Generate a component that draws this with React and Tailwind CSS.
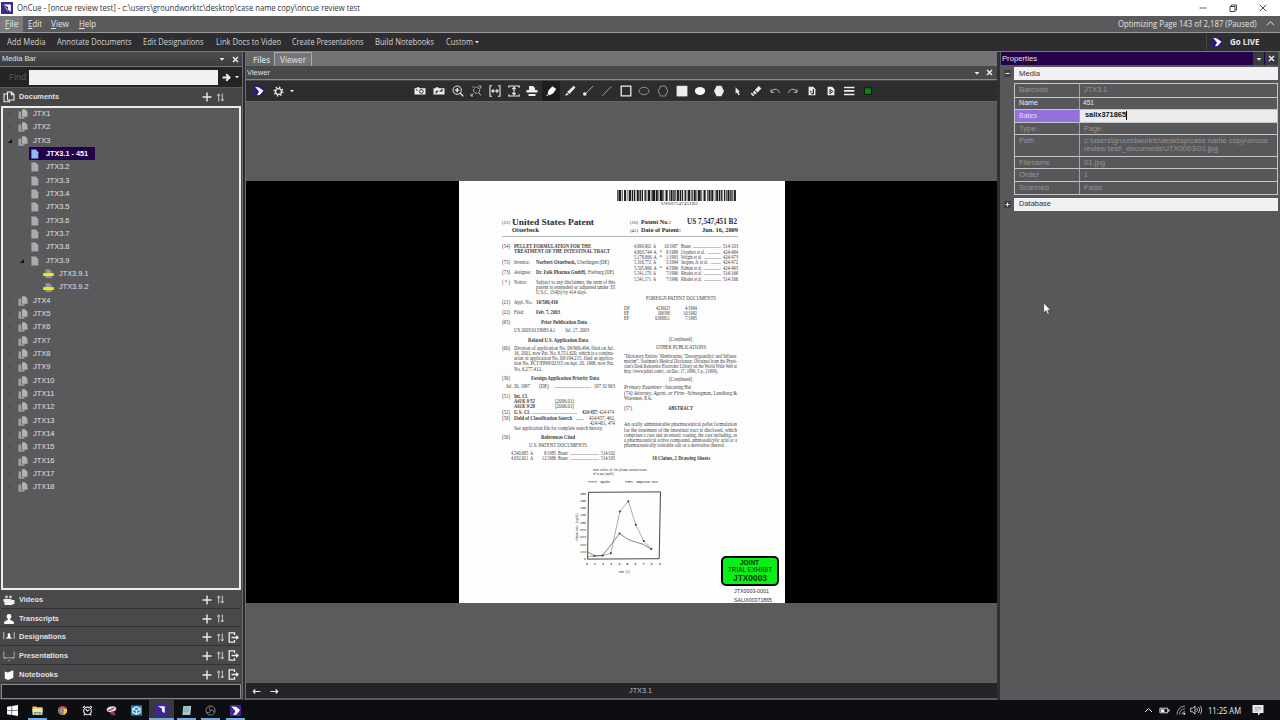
import React, { useLayoutEffect, useRef } from "react";

/* Text set to an exact width */
function Fit({ w, className = "", children }) {
  const ref = useRef(null);
  useLayoutEffect(() => {
    const el = ref.current;
    el.style.transform = "none";
    const natural = el.getBoundingClientRect().width;
    if (natural > 0) el.style.transform = `scaleX(${w / natural})`;
  }, [w, children]);
  return (
    <span className="flex shrink-0 whitespace-nowrap" style={{ width: w }}>
      <span ref={ref} className={"shrink-0 origin-left whitespace-pre " + className}>{children}</span>
    </span>
  );
}

const UI = "font-['Open_Sans',sans-serif]";

/* ---------- icons ---------- */
const Svg = ({ s = 12, className = "", children, vb = "0 0 12 12" }) => (
  <svg width={s} height={s} viewBox={vb} className={"shrink-0 " + className} fill="none" stroke="#ececee" strokeWidth="1">{children}</svg>
);
const Plus = () => <Svg s={10} vb="0 0 10 10"><path d="M5 .5v9M.5 5h9" strokeWidth="1.4" /></Svg>;
const Sort = () => <Svg s={9} vb="0 0 9 10"><path d="M2.5 9.5V1.5M1 3l1.5-2L4 3M6.5.5v8M5 7l1.5 2L8 7" strokeWidth=".9" /></Svg>;
const Exit = () => <Svg s={11} vb="0 0 11 11" className="-ml-[1.5px]"><path d="M6.5 3V.8H1.2v9.4h5.3V8M3.5 5.5H10M8.2 3.8L10 5.5 8.2 7.2" strokeWidth="1.3" /></Svg>;
const Down = () => <Svg s={6} vb="0 0 6 6"><path d="M.6 2h4.8L3 4.7z" fill="#eee" stroke="none" /></Svg>;
const Tiny = () => <Svg s={4} vb="0 0 4 4"><path d="M0 1h4L2 3.2z" fill="#eee" stroke="none" /></Svg>;
const Close = () => <Svg s={7} vb="0 0 7 7"><path d="M1 1l5 5M6 1L1 6" strokeWidth="1.5" /></Svg>;
const DocsHead = () => <Svg s={12}><path d="M4.5 1h4l2.5 2.5V9H4.5zM8.3 1v2.8H11M4.5 3H1v7.8h5.5V9" strokeWidth="1.1" /></Svg>;
const Docs = () => <Svg s={10} vb="0 0 10 10"><path d="M.5 2.5h2.7v5.7h3.3v1.6h-6z" fill="#a2a2a4" stroke="none" /><path d="M4 .3h3l2.5 2.5v5H4z" fill="#b2b2b4" stroke="none" /></Svg>;
const Doc = ({ sel }) => <Svg s={10} vb="0 0 10 10"><path d="M1.4.5h4.4l2.5 2.7v6.3H1.4z" fill={sel ? "#8fb8f4" : "#aaaaac"} stroke="none" /></Svg>;
const Hl = () => <Svg s={11} vb="0 0 11 10"><path d="M2.5.8h4l2 2v6.7h-6z" fill="#96968c" stroke="none" /><path d="M.2 4.6h10.6v2.9H.2z" fill="#f0ec10" stroke="none" /></Svg>;
const Cue = ({ s = 10 }) => (
  <Svg s={s} vb="0 0 10 10"><path d="M0 0h10v10H0z" fill="#2a1b80" stroke="none" /><path d="M1 .8l4 .7 4.5 3.2L5.6 9 3 9.3 5 5.6z" fill="#fff" stroke="none" /></Svg>
);
const AppIcon = ({ s = 11 }) => (
  <Svg s={s} vb="0 0 11 11"><path d="M0 0h11v11H0z" fill="#3a2b86" stroke="none" /><path d="M2 2.2h7v7L6.5 7V4.5z" fill="#fff" stroke="none" /><path d="M2 2.2l4 4V9z" fill="#a69ed4" stroke="none" /></Svg>
);

const camBody = <path d="M.5 3.2h2L3 2.3h2.2l.5.9h5.8v6.3H.5z" fill="#ececee" stroke="none" />;
const page = <path d="M2.6 1.8h4.6l2.2 2.4v6H2.6z" fill="#ececee" stroke="none" />;
const tools = [
  <>{camBody}<circle cx="7.4" cy="6.4" r="1.9" stroke="#333" /><path d="M2 5h1.6" stroke="#333" /></>,
  <>{camBody}<path d="M3 8.2V6.2h2M3.2 8L5.4 6M9.2 4v2.2h-2M9 4.4L6.8 6.6" stroke="#333" strokeWidth="1" /></>,
  <><circle cx="5.2" cy="5.2" r="4.2" /><path d="M8.2 8.2l3.2 3.2M5.2 3v4.4M3 5.2h4.4" strokeWidth="1.3" /></>,
  <g stroke="#bdbdbf"><path d="M2.5 2.5l1-1.3M10.8 1v2.5M10.8 1H8.5M1 11l2.4-2.4M1 8.7V11h2" /><circle cx="6.6" cy="5.2" r="3.1" strokeDasharray="3 .8" /><path d="M8.8 7.6l2 2.8" /></g>,
  <path d="M3 .8H1v10.4h2M9 .8h2v10.4H9M3 6h6M4.6 4.3L2.8 6l1.8 1.7M7.4 4.3L9.2 6 7.4 7.7" strokeWidth="1.1" />,
  <path d="M.8 2.8V1h10.4v1.8M.8 9.2V11h10.4V9.2M6 2.5v7M4.3 4.2L6 2.4l1.7 1.8M4.3 7.8L6 9.6l1.7-1.8" strokeWidth="1.1" />,
  <g fill="#ececee" stroke="none"><path d="M3 1h4l2 2v2.6H3zM.5 5h11v2.6H.5zM2.5 9h7v2h-7z" /></g>,
  <g fill="#fff" stroke="none"><path d="M7.4 1.2l3.8 2.8-3.2 4.6-3.6 1.6-1.6-1.2.6-3.6zM2.2 9.2l1.4 1-2.4.8z" /></g>,
  <g fill="#ececee" stroke="none"><path d="M9.7.8l1.8 1.8-6 6.4-2.4-1.9zM2.7 7.7l2 1.8-3.6 1.5z" /></g>,
  <><path d="M11.2 1L4.2 8" stroke="#bbb" strokeWidth=".9" /><circle cx="2.8" cy="9" r="1.8" fill="#ececee" stroke="none" /></>,
  <path d="M10.5 1.3L1.2 10.8" stroke="#a8a8aa" strokeWidth=".9" />,
  <path d="M1.2 1.2h9.6v9.6H1.2z" strokeWidth="1.3" />,
  <ellipse cx="6" cy="6" rx="4.9" ry="3.7" stroke="#98989a" strokeWidth=".9" />,
  <path d="M3.6 1h4.8l2.4 5-2.4 5H3.6L1.2 6z" stroke="#98989a" strokeWidth=".9" />,
  <path d="M.6.8h10.8v10.6H.6z" fill="#ececee" stroke="none" />,
  <ellipse cx="6" cy="6" rx="5.2" ry="4" fill="#f4f4f4" stroke="none" />,
  <path d="M3.6.7h4.8L11 6l-2.6 5.3H3.6L1 6z" fill="#ececee" stroke="none" />,
  <path d="M4.6 2.2l4.4 4.6H7.4l1.4 2.9-1.4.6-1.3-2.7-1.5 1.2z" fill="#ececee" stroke="none" />,
  <g fill="#ececee" stroke="none"><path d="M8.7 1l2.7 2.5-3.8 4L4.8 5zM4.2 5.6l2.7 2.6-2 1.2-2-1.7zM1.7 7.6l2.7 2.6-1.2 1L.7 9z" /></g>,
  <path d="M2 4.3v3h3M2.2 7C3.2 4 8.8 2.4 10.6 7.8" stroke="#bdbdbf" />,
  <path d="M10 4.3v3H7M9.8 7C8.8 4 3.2 2.4 1.4 7.8" stroke="#bdbdbf" />,
  <>{page}<path d="M6.8 4.6h.6v4H5.2M5.4 6L4.2 7.2" stroke="#222" strokeWidth="1.1" /></>,
  <>{page}<path d="M5 4.5l2.8 2-2.8 2.1z" stroke="#222" strokeWidth="1" /></>,
  <path d="M1 2.5h10.4M1 5.9h10.4M1 9.5h10.4" strokeWidth="1.6" />,
  <path d="M2.4 2.8h7v6.6h-7z" fill="#0b850b" stroke="#061c06" />,
];

/* ---------- left panel ---------- */
const seq = (a, b, f) => Array.from({ length: b - a + 1 }, (_, i) => f(a + i));
const tree = [
  { t: "JTX1", k: "set" }, { t: "JTX2", k: "set" }, { t: "JTX3", k: "set", open: true },
  { t: "JTX3.1 - 451", k: "doc", sel: true },
  ...seq(2, 8, (n) => ({ t: "JTX3." + n, k: "doc" })),
  { t: "JTX3.9", k: "doc", open: true },
  { t: "JTX3.9.1", k: "hl" }, { t: "JTX3.9.2", k: "hl" },
  ...seq(4, 18, (n) => ({ t: "JTX" + n, k: "set" })),
];
const treeWidth = (r) => (r.k === "hl" ? 29.5 : r.k === "doc" ? (r.sel ? 42 : 23.5) : r.t.length > 4 ? 21.5 : 17.5);

function TreeRow({ r }) {
  const pad = r.k === "set" ? "pl-[4px]" : r.k === "doc" ? "pl-[16px]" : "pl-[29px]";
  return (
    <div className={"flex h-[13.33px] items-center " + pad}>
      <svg width="6" height="6" viewBox="0 0 6 6" className={"shrink-0 " + (r.k === "doc" ? "mr-[4px]" : "mr-[5px]")}>
        {r.open ? <path d="M5 1v4H.8z" fill="#111" /> : r.k === "set" ? <path d="M1.5 1l2.5 2-2.5 2z" fill="#505054" /> : null}
      </svg>
      <div className={"flex h-[13px] items-center " + (r.sel ? "bg-[#21004c] pr-[7px] pl-[1px] font-bold text-white" : r.k === "doc" ? "pl-px" : "")}>
        {r.k === "set" ? <Docs /> : r.k === "doc" ? <Doc sel={r.sel} /> : <Hl />}
        <span className={r.k === "set" ? "w-[5px]" : r.k === "doc" ? "w-[6px]" : "w-[5px]"} />
        <Fit w={treeWidth(r)}>{r.t}</Fit>
      </div>
    </div>
  );
}

const sections = [
  { t: "Videos", w: 24, i: <><path d="M.5 5h8v1h3v4H9.5v1h-8V8H.5z" fill="#eee" stroke="none" /><circle cx="3.5" cy="3" r="1.4" fill="#ccc" stroke="none" /><circle cx="7.5" cy="3" r="1.4" fill="#ccc" stroke="none" /></> },
  { t: "Transcripts", w: 40, i: <g fill="#fff" stroke="none"><circle cx="6" cy="3.4" r="2.4" /><path d="M4.8 5h2.4v1.7l3.6 2V11H1.2V8.7l3.6-2z" /></g> },
  { t: "Designations", w: 47, exit: true, i: <><path d="M.8 1v7M11.2 1v7" stroke="#bbb" /><path d="M6 1.8l1.4 1.6L7 5.5l2.5 2H2.5l2.5-2-.4-2.1z" fill="#fff" stroke="none" /></> },
  { t: "Presentations", w: 49, exit: true, i: <path d="M.8 1.5v6.3h10.4V1.5M.8 7.8l1.6 1M11.2 7.8l-1.6 1M5.2 10.5h1.6" stroke="#a8a8aa" /> },
  { t: "Notebooks", w: 39, exit: true, i: <path d="M1.8 2.5l3 1 5.5-2.3v7.5L5 11 1.8 9.6z" fill="#fff" stroke="none" /> },
];

function MediaBar() {
  return (
    <div className="flex w-[242px] shrink-0 flex-col bg-[#464648] text-[8px] text-[#e0e0e2]">
      <div className="flex h-[14px] shrink-0 items-center bg-gradient-to-b from-[#4c4c4e] to-[#3d3d3f] pl-[2px]">
        <Fit w={34}>Media Bar</Fit>
        <span className="ml-auto flex items-center gap-[7px] pr-[3px]"><Down /><Close /></span>
      </div>
      <div className="flex h-[21px] shrink-0 items-center border-t border-[#77777a] bg-[#242426] pl-[9px]">
        <Fit w={17} className="text-[8.5px] text-[#59595b]">Find</Fit>
        <span className="ml-[3px] h-[15px] w-[189px] bg-[#f1f0f3]" />
        <Svg s={9} vb="0 0 9 9" className="ml-[4px]"><path d="M.5 4.5h6M4.2 1.3l3.3 3.2-3.3 3.2" strokeWidth="2" /></Svg>
        <span className="ml-[4px]"><Tiny /></span>
      </div>
      <div className="flex h-[19px] shrink-0 items-center border-t border-[#59595b] pl-[3px] font-bold">
        <DocsHead /><span className="w-[4px]" /><Fit w={40}>Documents</Fit>
        <span className="ml-auto flex items-center gap-[4px] pr-[17px]"><Plus /><Sort /></span>
      </div>
      <div className="mx-[1px] h-[484px] shrink-0 border-2 border-[#ededef] bg-[#5a5a5c]">
        <div className="-mt-[0.7px]">{tree.map((r) => <TreeRow key={r.t} r={r} />)}</div>
      </div>
      <div className="flex h-[94px] shrink-0 flex-col px-[1px]">
        {sections.map((s) => (
          <div key={s.t} className="flex h-[18.7px] shrink-0 items-center border-b border-[#323234] bg-[#49494b] pt-[2px] pl-[2px] font-bold">
            <Svg s={12}>{s.i}</Svg>
            <span className="w-[4px]" />
            <Fit w={s.w}>{s.t}</Fit>
            <span className="ml-auto flex w-[39px] items-center gap-[4px]"><Plus /><Sort />{s.exit && <Exit />}</span>
          </div>
        ))}
      </div>
      <div className="mx-[1px] h-[15px] border border-[#88888a] bg-[#1d1d1f]" />
      <div className="h-[1px] bg-[#39393b]" />
    </div>
  );
}

/* ---------- scanned page ---------- */
/* A line is [centre y, ...cells]; a cell is [x, width, text, style]. Without text it is a leader. */
const B = "font-bold";
const leftLines = [
  [245.5, [502, 8, "(54)"], [514.5, 77, "PELLET FORMULATION FOR THE", B]],
  [251, [514.5, 96, "TREATMENT OF THE INTESTINAL TRACT", B]],
  [261.5, [502, 8, "(75)"], [514.5, 16, "Inventor:"], [536, 40, "Norbert Otterbeck,", B], [577, 32, "Uberlingen (DE)"]],
  [271.5, [502, 8, "(73)"], [514.5, 17, "Assignee:"], [536, 50, "Dr. Falk Pharma GmbH,", B], [588, 26, "Freiburg (DE)"]],
  [281.5, [502, 8, "( * )"], [514.5, 13, "Notice:"], [536, 79, "Subject to any disclaimer, the term of this"]],
  [287, [536, 79, "patent is extended or adjusted under 35"]],
  [292, [536, 51, "U.S.C. 154(b) by 414 days."]],
  [302, [502, 8, "(21)"], [514.5, 19, "Appl. No.:"], [536, 22, "10/500,410", B]],
  [311.5, [502, 8, "(22)"], [514.5, 10, "Filed:"], [536, 24, "Feb. 7, 2003", B]],
  [321.5, [502, 8, "(65)"], [541.5, 46, "Prior Publication Data", B]],
  [329.5, [514.5, 41, "US 2003/0133983 A1"], [565, 24, "Jul. 17, 2003"]],
  [339.5, [528, 60, "Related U.S. Application Data", B]],
  [347.5, [502, 8, "(60)"], [514.5, 100, "Division of application No. 09/906,494, filed on Jul."]],
  [352.5, [514.5, 100, "16, 2001, now Pat. No. 6,551,620, which is a continu-"]],
  [358, [514.5, 100, "ation of application No. 09/194,215, filed as applica-"]],
  [363, [514.5, 100, "tion No. PCT/EP98/02315 on Apr. 20, 1998, now Pat."]],
  [368.5, [514.5, 28, "No. 6,277,412."]],
  [378.3, [502, 8, "(30)"], [531, 68, "Foreign Application Priority Data", B]],
  [386, [506, 24, "Jul. 30, 1997"], [539, 10, "(DE)"], [554, 37], [594, 21, "197 32 903"]],
  [396, [502, 8, "(51)"], [514.5, 14, "Int. Cl.", B]],
  [401, [514.5, 21, "A61K 9/52", "font-bold italic"], [555, 19, "(2006.01)"]],
  [406.5, [514.5, 21, "A61K 9/28", "font-bold italic"], [555, 19, "(2006.01)"]],
  [412.3, [502, 8, "(52)"], [514.5, 16, "U.S. Cl.", B], [532, 45], [582, 15, "424/457", B], [597.5, 17, "; 424/474"]],
  [418, [502, 8, "(58)"], [514.5, 58, "Field of Classification Search", B], [576, 8], [589, 26, "424/457, 462,"]],
  [423, [590, 25, "424/401, 474"]],
  [428.5, [514.5, 89, "See application file for complete search history."]],
  [437, [502, 8, "(56)"], [541.5, 34, "References Cited", B]],
  [445, [529, 58, "U.S. PATENT DOCUMENTS"]],
  [453.3, [511.5, 22, "4,540,685  A"], [544, 12, "9/1985"], [558, 10, "Bauer"], [570, 29], [601, 14, "514/102"]],
  [458.3, [511.5, 22, "4,632,921  A"], [542, 14, "12/1986"], [558, 10, "Bauer"], [570, 29], [601, 14, "514/103"]],
];
const rightLines = [
  [245.7, [634, 22, "4,699,902  A"], [664, 14, "10/1987"], [681, 10, "Bauer"], [693, 28], [723, 15, "514/103"]],
  [251.7, [634, 28, "4,803,744  A   *"], [666, 12, "9/1989"], [681, 24, "Urquhart et al."], [708, 13], [723, 15, "424/484"]],
  [257, [634, 28, "5,178,866  A   *"], [666, 12, "1/1993"], [681, 21, "Wright et al."], [704, 17], [723, 15, "424/473"]],
  [262.5, [634, 22, "5,316,772  A"], [666, 12, "5/1994"], [681, 27, "Jurgens, Jr. et al."], [711, 10], [723, 15, "424/472"]],
  [268, [634, 28, "5,505,966  A   *"], [666, 12, "4/1996"], [681, 21, "Edman et al."], [704, 17], [723, 15, "424/493"]],
  [273.5, [634, 22, "5,541,170  A"], [666, 12, "7/1996"], [681, 21, "Rhodes et al."], [704, 17], [723, 15, "514/166"]],
  [279, [634, 22, "5,541,171  A"], [666, 12, "7/1996"], [681, 21, "Rhodes et al."], [704, 17], [723, 15, "514/166"]],
  [298.5, [646, 70, "FOREIGN PATENT DOCUMENTS"]],
  [307.7, [624.5, 6, "DE"], [656, 14, "4230023"], [685, 12, "4/1994"]],
  [313, [624.5, 5, "EP"], [658, 12, "006398"], [683, 14, "10/1982"]],
  [318.3, [624.5, 5, "EP"], [655, 15, "0188811"], [685, 12, "7/1985"]],
  [338.7, [669, 23, "(Continued)"]],
  [347, [656, 50, "OTHER PUBLICATIONS"]],
  [355.7, [624.5, 113, "\"Dictionary Entries: 'Membranina,' 'Desoxyguanilics' and 'Influen-"]],
  [360.7, [624.5, 113, "matrim'\", Stedman's Medical Dictionary. Obtained from the Physi-"]],
  [365.7, [624.5, 113, "cian's Desk Reference Electronic Library on the World Wide Web at"]],
  [370.7, [624.5, 94, "http://www.pdnrl.com/c, on Dec. 17, 1999, 5 p., (1999)."]],
  [379.3, [669, 23, "(Continued)"]],
  [387.5, [624.5, 38, "Primary Examiner", "italic"], [663, 28, "–Suicaning Hui"]],
  [392.8, [624.5, 60, "(74) Attorney, Agent, or Firm", "italic"], [685, 52, "–Schwegman, Lundberg &"]],
  [398.3, [624.5, 28, "Woessner, P.A."]],
  [408.2, [624.5, 8, "(57)"], [668.5, 25, "ABSTRACT", B]],
  [424.3, [624.5, 113, "An orally administrable pharmaceutical pellet formulation"]],
  [429.6, [624.5, 113, "for the treatment of the intestinal tract is disclosed, which"]],
  [434.9, [624.5, 113, "comprises a core and an enteric coating, the core including, as"]],
  [440.2, [624.5, 113, "a pharmaceutical active compound, aminosalicylic acid or a"]],
  [445.5, [624.5, 101, "pharmaceutically tolerable salt or a derivative thereof."]],
  [457.8, [652, 58, "18 Claims, 2 Drawing Sheets", B]],
];

function Lines({ x, top, width, lines, size = "text-[5.2px]" }) {
  let at = top;
  return (
    <div className={"shrink-0 text-[#3c3c3c] " + size} style={{ width }}>
      {lines.map(([y, ...cells], i) => {
        const gap = y - 2.5 - at;
        at = y + 2.5;
        let cx = x;
        return (
          <div key={i} className="flex h-[5px] items-center leading-[5px]" style={{ marginTop: gap }}>
            {cells.map(([left, w, t, cls = ""], j) => {
              const ml = left - cx;
              cx = left + w;
              return (
                <div key={j} className="shrink-0" style={{ marginLeft: ml, width: w }}>
                  {t ? <Fit w={w} className={cls}>{t}</Fit> : <div className="mt-[2px] border-t border-[#c4c4c4]" />}
                </div>
              );
            })}
          </div>
        );
      })}
    </div>
  );
}

/* Bar widths and the gaps after them */
const barRun = [[1, 1], [2, 1], [3, 1], [1, 2], [3, 1], [2, 2], [1, 1], [4, 1], [1, 1], [2, 1], [3, 2]];
const barUnits = 172;

function Barcode() {
  const rects = [];
  for (let x = 0, i = 0; x < barUnits - 3; i++) {
    const [b, g] = barRun[(i * 7 + (i >> 3)) % barRun.length];
    rects.push(<rect key={i} x={x} y="0" width={b} height="11" fill="#1d1d1d" />);
    x += b + g;
  }
  return <svg width="121" height="11" viewBox={`0 0 ${barUnits} 11`} preserveAspectRatio="none" className="mt-[9px] ml-[158px] shrink-0">{rects}</svg>;
}

function Chart() {
  const sx = seq(0, 9, (n) => n);
  return (
    <svg width="100" height="112" viewBox="570 465 100 112" className="shrink-0" fill="none" stroke="#555" strokeWidth=".7">
      <g fill="#444" stroke="none" fontFamily="Liberation Mono" fontSize="3">
        <text x="593" y="470.5" textLength="54">Mean values of the plasma concentration</text>
        <text x="593" y="475" textLength="21">of 5-ASA (ug/ml)</text>
        <text x="600" y="483" textLength="10">Capsules</text>
        <text x="636" y="483" textLength="22">Comparative tests</text>
        <text x="618" y="573" textLength="12">Time (h)</text>
        <text x="0" y="0" textLength="28" transform="translate(578 541) rotate(-90)">Plasma conc. (ug/ml)</text>
        {sx.map((n) => <text key={n} x={586 + n * 8.1} y="564.5" fontWeight="bold">{n}</text>)}
        {sx.map((n) => <text key={n} x={n === 9 ? 584 : 580} y={494.5 + n * 7.3} textLength={n === 9 ? 2 : 6}>{n === 9 ? "0" : 1800 - n * 200}</text>)}
      </g>
      <path d="M588 481.8h9M625 481.8h8M629 480.8v2" />
      <path d="M588.5 492.3l72-.4-1.3 66.8-71.6.4z" stroke="#333" strokeWidth=".9" />
      <path d="M587.5 556.5l7-.3 8-.5 8.3-2.5 9-41.5 8.5-10.4 7.5 23.4 8 16.3 7.5 8" stroke="#888" />
      <path d="M587.5 551.8l6.5 3.8h8.5l9-11.5 8-10.6 8 5.7 8 2.8 8 2.4 7.5 4.6" />
      <g fill="#333" stroke="none">
        {[[619.8, 511.5], [628.3, 501.3], [635.8, 524.7], [643.8, 541], [651.3, 549], [610.8, 553.2], [619.5, 533.5], [602.5, 555.6], [594.5, 555.8]].map(([x, y]) => <circle key={x + y} cx={x} cy={y} r="1" />)}
      </g>
    </svg>
  );
}

function Scan() {
  return (
    <div className="flex h-[422px] w-[326px] shrink-0 flex-col overflow-hidden bg-[#fdfdfe] font-['Liberation_Serif',serif]">
      <Barcode />
      <div className="pl-[202px] text-[5px] leading-[6px] text-[#444]"><Fit w={37}>US007547451B2</Fit></div>
      <div className="mt-[9.5px] flex h-[11px] items-center pl-[43px] text-[#2a2a2a]">
        <Fit w={8} className="text-[5px]">(12)</Fit>
        <span className="w-[2px]" />
        <Fit w={82} className="text-[9px] font-bold">United States Patent</Fit>
        <span className="w-[36px]" />
        <Fit w={8} className="text-[5px]">(10)</Fit>
        <span className="w-[3px]" />
        <Fit w={30} className="text-[7px] font-bold">Patent No.:</Fit>
        <span className="w-[16px]" />
        <Fit w={50} className="text-[7.5px] font-bold">US 7,547,451 B2</Fit>
      </div>
      <div className="flex h-[7px] items-center pb-px pl-[53px] text-[6.5px] text-[#2a2a2a]">
        <Fit w={27} className={B}>Otterbeck</Fit>
        <span className="w-[91px]" />
        <Fit w={8} className="text-[5px]">(45)</Fit>
        <span className="w-[3px]" />
        <Fit w={40} className={B}>Date of Patent:</Fit>
        <span className="w-[21px]" />
        <Fit w={36} className={B}>Jun. 16, 2009</Fit>
      </div>
      <div className="mt-[1px] mb-[1px] ml-[43px] w-[236px] border-t border-[#b4b4b4]" />
      <div className="flex h-[227.5px] shrink-0 pl-[43px]">
        <Lines x={502} top={237} width={122} lines={leftLines} />
        <Lines x={624} top={237} width={116} lines={rightLines} />
      </div>
      <div className="flex min-h-0 flex-1 pl-[111px]">
        <Chart />
        <div className="ml-[51px] flex w-[58px] flex-col items-center pt-[91px] font-['Liberation_Sans',sans-serif]">
          <div className="flex h-[30px] w-[58px] shrink-0 flex-col items-center justify-center rounded-[5px] border-2 border-black bg-[#08f016] text-[#052e08]">
            <Fit w={19} className="text-[7px] leading-[7px] font-bold">JOINT</Fit>
            <Fit w={44} className="text-[7px] leading-[7px]">TRIAL EXHIBIT</Fit>
            <Fit w={34} className="text-[8.5px] leading-[10px] font-bold">JTX0003</Fit>
          </div>
          <div className="flex flex-col pt-[1px] pl-[6px] text-[6px] leading-[8.6px] text-[#333]">
            <Fit w={35}>JTX0003-0001</Fit>
            <Fit w={38}>SALIX00371865</Fit>
          </div>
        </div>
      </div>
    </div>
  );
}

function Viewer() {
  return (
    <div className="flex w-[751px] shrink-0 flex-col bg-[#5b5b5d] text-[8px] text-[#e0e0e2]">
      <div className={"flex h-[14px] shrink-0 items-center bg-[#737375] text-[9px] " + UI}>
        <div className="flex h-full w-[28px] items-center bg-[#666668] pl-[7px]"><Fit w={17} className="font-semibold text-[#d8d8da]">Files</Fit></div>
        <div className="flex h-full w-[38px] items-center border border-b-0 border-[#a9a9ab] bg-[#767678] pl-[5px]"><Fit w={26}>Viewer</Fit></div>
      </div>
      <div className="flex h-[14px] shrink-0 items-center border-b border-[#88888a] bg-[#49494b] pl-[1px]">
        <Fit w={23}>Viewer</Fit>
        <span className="ml-auto flex items-center gap-[6px] pr-[4px]"><Down /><Close /></span>
      </div>
      <div className="flex h-[21px] shrink-0 items-center border-t border-[#48484a] bg-[#2d2d2f]">
        <span className="ml-[8px]"><Cue s={10} /></span>
        <Svg s={11} className="ml-[9px]"><circle cx="6" cy="6" r="3.2" strokeWidth="1.4" /><circle cx="6" cy="6" r="4.7" strokeWidth="1.5" strokeDasharray="1.6 2.09" /></Svg>
        <span className="ml-[6px]"><Tiny /></span>
        <div className="ml-[117px] flex h-full">
          {tools.map((t, i) => (
            <div key={i} className={"flex h-full w-[18.667px] items-center justify-center " + (i === 7 ? "bg-[#1d1d1f]" : "")}><Svg s={12}>{t}</Svg></div>
          ))}
        </div>
      </div>
      <div className="h-[80px] shrink-0 border-t border-[#666668]" />
      <div className="flex h-[422px] shrink-0 bg-black pl-[212.5px]"><Scan /></div>
      <div className="flex-1" />
      <div className="mb-[2px] flex h-[15px] items-center bg-[#252527] pt-px text-[#b8b8ba]">
        <Svg s={9} vb="0 0 9 9" className="ml-[6px]"><path d="M8.5 4.5h-7M3.3 2.5l-2 2 2 2" strokeWidth="1.2" /></Svg>
        <Svg s={9} vb="0 0 9 9" className="ml-[9px]"><path d="M.5 4.5h7M5.7 2.5l2 2-2 2" strokeWidth="1.2" /></Svg>
        <span className="w-[349.5px]" />
        <Fit w={23}>JTX3.1</Fit>
      </div>
    </div>
  );
}

/* ---------- properties ---------- */
const Dim = "text-[#949496]";
const props = [
  ["Barcode", 29, "JTX3.1", 23, Dim, "h-[12.6px]"],
  ["Name", 19, "451", 11, "text-[#e8e8ea]", "h-[12.6px]"],
  ["Bates", 18, "salix371865", 41, "edit", "h-[12.6px]"],
  ["Type", 17, "Page", 17, Dim, "h-[12.6px]"],
  ["Path", 15, null, 0, Dim, "h-[21.5px]"],
  ["Filename", 31, "01.jpg", 21, Dim, "h-[12.6px]"],
  ["Order", 20, "1", 3.5, Dim, "h-[12.6px]"],
  ["Scanned", 30, "False", 18.5, Dim, "h-[12.6px]"],
];
const Group = ({ sign, t, w, className = "" }) => (
  <div className={"flex h-[13px] items-center " + className}>
    <Svg s={7} vb="0 0 7 7" className="mr-[3px] ml-[4px]"><path d="M.5 0h6v7h-6z" fill="#3d3d3f" stroke="none" /><path d={sign} strokeWidth="1.1" /></Svg>
    <div className="flex h-full w-[264px] items-center bg-[#f1f0f3] pl-[4.5px] text-[#333]"><Fit w={w}>{t}</Fit></div>
  </div>
);

function Properties() {
  return (
    <div className="flex w-[280px] shrink-0 flex-col bg-[#58585a] text-[8px] text-[#e0e0e2]">
      <div className="mr-[2px] ml-[1px] flex h-[13px] items-center bg-[#25004b] pl-[1px]">
        <Fit w={35}>Properties</Fit>
        <span className="ml-auto flex h-full w-[11px] items-center justify-center bg-[#3a3a3e]"><Down /></span>
        <span className="ml-[1px] flex h-full w-[13px] items-center justify-center bg-[#3a3a3e]"><Close /></span>
      </div>
      <Group sign="M1.5 3.5h4" t="Media" w={21} className="mt-[2px]" />
      <div className="mt-[3px] mr-[2px] ml-[14px] border border-[#c6c6c8]">
        {props.map(([k, kw, v, vw, c, h], i) => (
          <div key={k} className={"flex " + h + (i ? " border-t border-[#c6c6c8]" : "")}>
            <div className={"flex w-[65px] border-r border-[#a2a2a4] pl-[4px] " + (v === null ? "items-start pt-[2px] " : "items-center ") + (c === "edit" ? "bg-[#9370dc] text-[#e6dcf8]" : c)}>
              <Fit w={kw}>{k}</Fit>
            </div>
            {c === "edit" ? (
              <div className="flex flex-1 items-center bg-[#ebebeb] pb-px pl-[5px] text-[#111]">
                <Fit w={vw} className={B}>{v}</Fit><span className="h-[9px] w-px bg-black" />
              </div>
            ) : v === null ? (
              <div className={"flex flex-1 flex-col pt-[1.5px] pl-[4px] leading-[8.6px] " + c}>
                <Fit w={184}>c:\users\groundworktc\desktop\case name copy\oncue</Fit>
                <Fit w={134}>review test\_documents\JTX0003\01.jpg</Fit>
              </div>
            ) : (
              <div className={"flex flex-1 items-center " + c + (i === 1 ? " pl-[3px]" : " pl-[4px]")}><Fit w={vw}>{v}</Fit></div>
            )}
          </div>
        ))}
      </div>
      <Group sign="M1.5 3.5h4M3.5 1.5v4" t="Database" w={32} className="mt-[3px]" />
    </div>
  );
}

/* ---------- taskbar ---------- */
const apps = [
  { i: <path d="M0 2l5-.8v4.5H0zM5.6 1.1L12 0v5.7H5.6zM0 6.3h5v4.5L0 10zM5.6 6.3H12V12l-6.4-1z" fill="#fff" stroke="none" /> },
  { u: 1, i: <><path d="M.5 1.5h4l1 1h6v8.5H.5z" fill="#efc75c" stroke="none" /><path d="M.5 4h11v4H.5z" fill="#f8e49c" stroke="none" /><path d="M2.5 11V7.5h7V11H8V9H4v2z" fill="#4aa3d8" stroke="none" /></> },
  { i: <g stroke="none"><circle cx="6" cy="6" r="5" fill="#dd4b3e" /><path d="M1.6 3.6L6 11A5 5 0 0 1 1.6 3.6z" fill="#33a457" /><path d="M6 4h4.6A5 5 0 0 1 6 11l2.2-4z" fill="#f6cc3a" /><circle cx="6" cy="6" r="2.3" fill="#eee" /><circle cx="6" cy="6" r="1.8" fill="#4a86e8" /></g> },
  { i: <><circle cx="6" cy="6.5" r="4.2" strokeWidth="1.2" /><path d="M4 4.5l2 2 2-1.5M1 3l2-2M11 3L9 1M3 10l-1 1.5M9 10l1 1.5" strokeWidth="1.2" /></> },
  { i: <><ellipse cx="6" cy="4.6" rx="5.3" ry="3" fill="#e8dfe4" stroke="none" transform="rotate(-12 6 5)" /><path d="M2 6.5l7-3M6 7l4 4" stroke="#c8383c" strokeWidth="1.5" /><circle cx="7" cy="9" r="1.6" stroke="#4584c6" /></> },
  { i: <><path d="M0 .5h12v11H0z" fill="#208bc2" stroke="none" /><path d="M6 1.8l4 2.2v4L6 10.2 2 8V4zM2 4l4 2.2L10 4M6 6.2v4" strokeWidth="1.2" /></> },
  { u: 1, on: 1, i: <><path d="M0 0h12v12H0z" fill="#40249b" stroke="none" /><path d="M2 2.5h7.5v7.5L6.5 8V5z" fill="#fff" stroke="none" /></> },
  { u: 1, i: <><path d="M2.5 1h8L9.5 11h-8z" fill="#9ecbc8" stroke="none" /><path d="M3.5 3h6M3.3 5h6M3 7h6" stroke="#6d9c9c" strokeWidth=".6" /><path d="M9.5 11l1-10" stroke="#ddd" /></> },
  { u: 1, i: <g stroke="#8d8d8f"><circle cx="6" cy="6" r="5" /><path d="M6 6c-2-1-2-3 0-4M6 6c2-1 4 0 4 2M6 6c0 2-2 3-4 2" /></g> },
  { u: 1, i: <><path d="M0 0h12v12H0z" fill="#452596" stroke="none" /><path d="M1.5 1.5l5 .5L11 5.5 7 10.5 3.5 11 6 6.5z" fill="#fff" stroke="none" /></> },
];

function Taskbar() {
  return (
    <div className={"flex h-[20px] items-center bg-[#0d0e12] pl-[0.5px] text-[9px] text-[#eee] " + UI}>
      {apps.map((a, i) => (
        <div key={i} className={"flex h-full w-[24.75px] shrink-0 items-center justify-center " + (a.on ? "border-b-2 border-[#76a9dc] bg-[#38383e]" : "")}>
          <div className={"flex h-full w-[19px] items-center justify-center border-b-2 border-t-2 border-t-transparent " + (a.u && !a.on ? "border-b-[#76a9dc]" : "border-b-transparent")}><Svg s={11}>{a.i}</Svg></div>
        </div>
      ))}
      <div className="mr-[16px] ml-auto flex items-center">
        <Svg s={9} vb="0 0 9 9"><path d="M1 6l3.5-3.5L8 6" /></Svg>
        <Svg s={11} className="ml-[6px]"><path d="M1 3.5h8.5v5H1z" /><path d="M2 4.5h4v3H2zM10 5h1.5v2H10z" fill="#eee" stroke="none" /></Svg>
        <Svg s={10} vb="0 0 10 10" className="ml-[6px]"><path d="M1 9.5A8.5 8.5 0 0 1 9 1M3.5 9.5A6 6 0 0 1 9 3.8M6 9.5A3.5 3.5 0 0 1 9 6.5" stroke="#9a9a9c" /><circle cx="8.3" cy="8.7" r="1" fill="#eee" stroke="none" /></Svg>
        <Svg s={12} className="ml-[4px]"><path d="M.7 4.2h2L5 2v8L2.7 7.8h-2zM6.7 4.3c.9 1 .9 2.4 0 3.4M8.4 3c1.5 1.8 1.5 4.2 0 6M10.1 1.8c2.1 2.6 2.1 5.8 0 8.4" strokeWidth=".8" /></Svg>
        <span className="w-[6px]" />
        <Fit w={33}>11:25 AM</Fit>
        <Svg s={12} className="ml-[11px]"><path d="M.5 1h11v8H8.5L6 11.5V9H.5z" fill="#eee" stroke="none" /><path d="M2.5 3.5h7M2.5 5.2h7M2.5 7h4" stroke="#888" strokeWidth=".7" /></Svg>
      </div>
    </div>
  );
}

const menus = [["File", 13.5], ["Edit", 14], ["View", 18], ["Help", 17]];
const actions = [["Add Media", 38.5], ["Annotate Documents", 74.5], ["Edit Designations", 60.5], ["Link Docs to Video", 65], ["Create Presentations", 71.5], ["Build Notebooks", 59], ["Custom", 27]];

export default function App() {
  return (
    <div className="relative flex h-[720px] w-[1280px] flex-col overflow-hidden bg-[#333335] font-['Liberation_Sans',Arial,sans-serif] leading-none">
      <div className={"flex h-[16px] items-center bg-white pb-px pl-[1px] text-[9px] text-[#333] " + UI}>
        <AppIcon s={12} />
        <span className="w-[4px]" />
        <Fit w={343}>OnCue - [oncue review test] - c:\users\groundworktc\desktop\case name copy\oncue review test</Fit>
        <span className="ml-auto flex items-center gap-[22px] pr-[13px]">
          <Svg s={8} vb="0 0 8 8"><path d="M.5 4h7" stroke="#333" strokeWidth=".8" /></Svg>
          <Svg s={8} vb="0 0 8 8"><path d="M1 2.5h5v5H1zM2.5 2.5V1h5v5H6" stroke="#333" strokeWidth=".9" /></Svg>
          <Svg s={8} vb="0 0 8 8"><path d="M.8.8l6.4 6.4M7.2.8L.8 7.2" stroke="#333" strokeWidth=".9" /></Svg>
        </span>
      </div>
      <div className={"flex h-[17px] items-center border-b border-[#9a9a9c] bg-[#5a5a5c] text-[9px] text-[#e4e4e6] " + UI}>
        {menus.map(([t, w], i) => (
          <div key={t} className={"flex h-full items-center pb-px " + (i ? (i === 3 ? "pl-[6px]" : "pr-[4px] pl-[5px]") : "w-[22.5px] bg-[#7b7b7d] pl-[5px]")}>
            <Fit w={w}><u>{t[0]}</u>{t.slice(1)}</Fit>
          </div>
        ))}
        <span className="ml-auto flex items-center gap-[10px] pr-[5px] pb-px"><Fit w={138.5}>Optimizing Page 143 of 2,187 (Paused)</Fit><Svg s={9} vb="0 0 9 9"><path d="M.8 6.3L4.5 2.6l3.7 3.7" strokeWidth=".9" /></Svg></span>
      </div>
      <div className={"flex h-[18px] items-center gap-[11.7px] bg-[#2e2e30] pb-px pl-[7px] text-[9px] text-[#d2d2d4] " + UI}>
        {actions.map(([t, w]) => <Fit key={t} w={w}>{t}</Fit>)}
        <span className="-ml-[10px]"><Tiny /></span>
        <div className="ml-auto flex h-[16px] items-center border-l border-[#454547] pr-[21px] pl-[5px]">
          <Cue s={10} /><span className="w-[8px]" /><Fit w={29.5} className="font-bold text-[#ececee]">Go LIVE</Fit>
        </div>
      </div>
      <div className="flex h-[649px] shrink-0 border-t border-[#77777a]">
        <MediaBar />
        <div className="w-[4px] border-x border-[#6e6e70] bg-[#2c2c2e]" />
        <Viewer />
        <div className="w-[3px] bg-[#303034]" />
        <Properties />
      </div>
      <Taskbar />
      <svg width="9" height="14" viewBox="0 0 9 14" className="absolute top-[302px] left-[1043px]"><path d="M.7.8v10l2.3-2 1.7 3.7 1.6-.7L4.7 8.2h3z" fill="#fff" stroke="#222" strokeWidth=".6" /></svg>
    </div>
  );
}
